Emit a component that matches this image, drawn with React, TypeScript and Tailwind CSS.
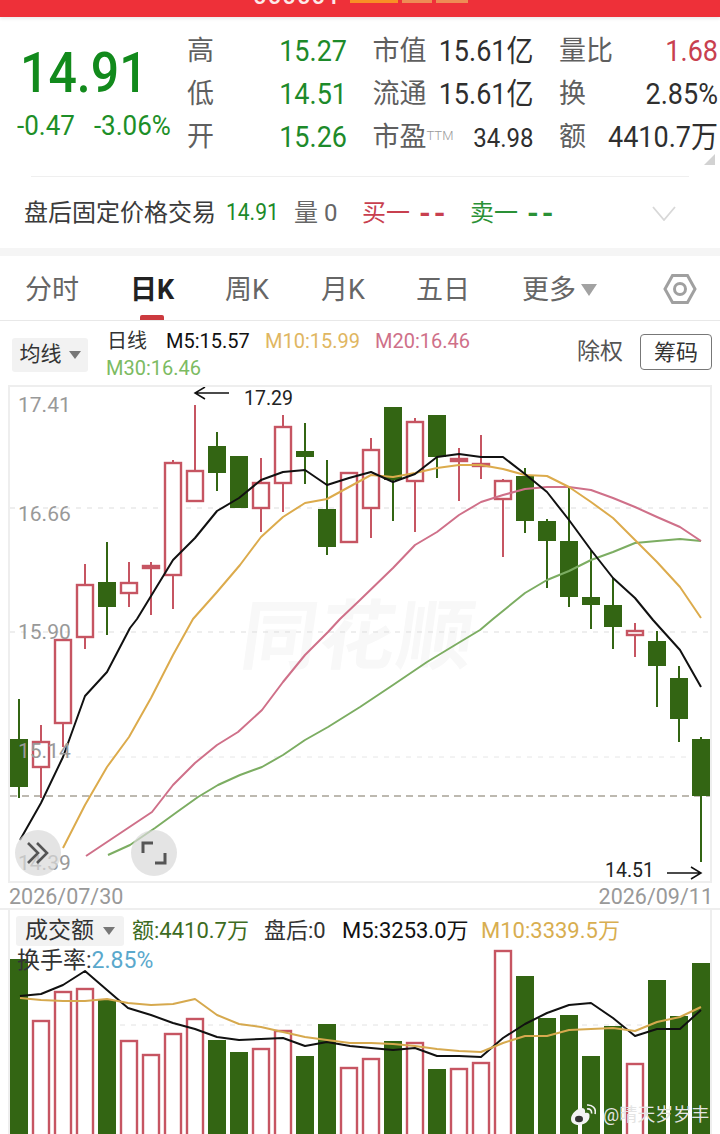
import React from "react";

type Candle = [number, boolean, number, number, number, number];

// x, rising, wick top, wick bottom, body top, body bottom (page coordinates)
const candles: Candle[] = [
  [19, false, 699, 798, 739, 787],
  [41, true, 725, 798, 742, 767],
  [63, true, 640, 747, 640, 723],
  [85, true, 564, 649, 585, 637],
  [107, false, 542, 635, 582, 607],
  [129, true, 562, 607, 583, 593],
  [151, true, 562, 615, 566, 568],
  [173, true, 460, 609, 463, 575],
  [195, true, 405, 501, 471, 501],
  [217, false, 432, 491, 446, 473],
  [239, false, 456, 508, 456, 508],
  [261, true, 458, 532, 483, 508],
  [283, true, 415, 512, 427, 483],
  [305, false, 423, 484, 451, 457],
  [327, false, 460, 555, 509, 547],
  [349, true, 472, 542, 473, 542],
  [371, true, 438, 538, 450, 508],
  [393, false, 407, 521, 407, 480],
  [415, true, 418, 532, 422, 481],
  [437, false, 415, 478, 415, 457],
  [459, true, 448, 501, 459, 461],
  [481, true, 435, 479, 464, 466],
  [503, true, 479, 557, 481, 499],
  [525, false, 468, 533, 476, 521],
  [547, false, 519, 588, 521, 541],
  [569, false, 486, 607, 541, 597],
  [591, false, 550, 629, 597, 605],
  [613, false, 578, 649, 605, 627],
  [635, true, 623, 657, 631, 635],
  [657, false, 631, 707, 641, 666],
  [679, false, 666, 742, 678, 719],
  [701, false, 737, 862, 739, 796],
];

const volumes: [number, boolean, number][] = [
  [19, false, 959], [41, true, 1021], [63, true, 992], [85, true, 989],
  [107, false, 1000], [129, true, 1041], [151, true, 1055], [173, true, 1034],
  [195, true, 1019], [217, false, 1040], [239, false, 1052], [261, true, 1049],
  [283, true, 1031], [305, false, 1056], [327, false, 1024], [349, true, 1068],
  [371, true, 1059], [393, false, 1041], [415, true, 1043], [437, false, 1069],
  [459, true, 1069], [481, true, 1063], [503, true, 951], [525, false, 976],
  [547, false, 1018], [569, false, 1015], [591, false, 1056], [613, false, 1026],
  [635, true, 1064], [657, false, 980], [679, false, 1016], [701, false, 963],
];

const m5 = "20,840 41,803 63,757 85,696 107,672 130,628 137,619 173,560 195,538 217,511 239,498 261,480 283,472 305,470 327,485 349,478 371,472 393,482 415,474 437,457 459,454 481,457 503,457 525,474 547,492 569,520 591,550 613,578 635,598 653,620 680,650 701,687";
const m10 = "63,848 85,805 107,767 129,737 151,698 173,655 193,619 217,592 240,565 261,537 283,517 305,503 327,499 349,487 371,475 393,477 415,473 437,468 459,465 481,465 503,469 525,475 547,476 569,487 591,502 613,518 635,540 657,562 680,587 701,618";
const m20 = "86,856 152,812 173,785 195,763 217,745 238,732 262,710 283,682 305,655 328,632 340,619 360,600 393,568 415,545 437,532 459,515 481,502 503,495 525,489 547,487 569,487 591,490 613,498 635,507 657,517 680,527 701,541";
const m30 = "108,855 130,845 155,828 177,812 198,797 218,785 240,775 262,767 283,755 305,740 328,727 360,707 393,685 427,662 460,642 480,630 493,619 525,593 547,580 569,571 591,560 613,552 635,543 657,541 680,539 701,541";
const volM5 = "20,996 41,994 63,985 85,971 107,990 128,1008 151,1015 173,1023 195,1029 217,1037 239,1040 261,1039 283,1038 305,1046 327,1042 350,1046 371,1048 393,1050 415,1048 437,1056 459,1056 481,1057 503,1038 525,1024 547,1013 569,1005 591,1003 613,1018 635,1036 657,1029 680,1029 701,1010";
const volM10 = "20,998 41,1000 63,1001 85,1001 107,999 128,1003 151,1005 173,1004 195,999 217,1015 239,1024 261,1027 283,1032 305,1037 327,1040 350,1043 371,1043 393,1044 415,1046 437,1049 459,1051 481,1052 503,1043 525,1036 547,1036 569,1030 591,1029 613,1028 635,1031 657,1022 680,1017 701,1007";

const RED = "#c65562";
const GREEN = "#336513";

function Stat({ label, value, color = "text-[#2f2f2f] text-[27px]" }: { label: React.ReactNode; value: string; color?: string }) {
  return (
    <div className="flex items-center justify-between">
      <span className="text-[27px] text-[#5f5f5f]">{label}</span>
      <span className={`inline-block scale-y-[1.1] ${color}`}>{value}</span>
    </div>
  );
}

function PriceChart() {
  return (
    <svg className="relative block" width="700" height="494" viewBox="10 387 700 494">
      <line x1="10" x2="710" y1="508" y2="508" stroke="#ddd" strokeDasharray="5 6" />
      <line x1="10" x2="710" y1="632" y2="632" stroke="#ddd" strokeDasharray="5 6" />
      <line x1="10" x2="710" y1="757" y2="757" stroke="#e6e6e6" strokeDasharray="5 6" />
      <line x1="10" x2="710" y1="796" y2="796" stroke="#a8a296" strokeWidth="1.5" strokeDasharray="7 5" />
      {candles.map(([x, up, wt, wb, bt, bb]) => (
        <g key={x}>
          <line x1={x} x2={x} y1={wt} y2={wb} stroke={up ? RED : GREEN} strokeWidth="2" />
          {up ? (
            <rect x={x - 8} y={bt} width="16" height={Math.max(bb - bt, 2)} fill="#fff" stroke={RED} strokeWidth="2.4" />
          ) : (
            <rect x={x - 9} y={bt} width="18" height={bb - bt} fill={GREEN} />
          )}
        </g>
      ))}
      <polyline points={m30} fill="none" stroke="#7cad62" strokeWidth="2" strokeLinejoin="round" />
      <polyline points={m20} fill="none" stroke="#cf7089" strokeWidth="2" strokeLinejoin="round" />
      <polyline points={m10} fill="none" stroke="#dcab4c" strokeWidth="2" strokeLinejoin="round" />
      <polyline points={m5} fill="none" stroke="#111" strokeWidth="2" strokeLinejoin="round" />
      <path d="M229 393H195M205 387L195 393L205 399" fill="none" stroke="#111" strokeWidth="1.5" />
      <path d="M667 873H701M691 867L701 873L691 879" fill="none" stroke="#111" strokeWidth="1.5" />
    </svg>
  );
}

function VolumeChart() {
  return (
    <svg className="block" width="700" height="224" viewBox="10 910 700 224">
      <line x1="120" x2="710" y1="1025" y2="1025" stroke="#e2e2e2" strokeDasharray="5 6" />
      {volumes.map(([x, up, top]) =>
        up ? (
          <rect key={x} x={x - 8} y={top} width="16" height={1140 - top} fill="#fff" stroke={RED} strokeWidth="2.4" />
        ) : (
          <rect key={x} x={x - 9} y={top} width="18" height={1134 - top} fill={GREEN} />
        ),
      )}
      <polyline points={volM5} fill="none" stroke="#111" strokeWidth="2" strokeLinejoin="round" />
      <polyline points={volM10} fill="none" stroke="#d6a94e" strokeWidth="2" strokeLinejoin="round" />
    </svg>
  );
}

export default function App() {
  return (
    <div className="relative h-[1134px] w-[720px] overflow-hidden bg-white font-[family-name:Roboto,'Noto_Sans_CJK_SC',sans-serif]">
      {/* Red title bar, cut by the top of the picture */}
      <div className="flex h-[17px] items-start overflow-hidden bg-[#ee3039] pl-[253px] shadow-[0_2px_3px_rgba(0,0,0,0.08)]">
        <span className="-mt-[16px] w-[97px] text-[24px] leading-[24px] font-medium tracking-[1px] text-[#fde8e8]">000001</span>
        <span className="h-[3px] w-[48px] bg-[#f98f25]" />
        <span className="ml-[4px] h-[3px] w-[30px] bg-[#ee8b55]" />
        <span className="ml-[4px] h-[3px] w-[32px] bg-[#ee8b55]" />
      </div>

      {/* Quote */}
      <div className="relative h-[231px]">
        <div className="flex pt-[13px]">
          <div className="w-[187px] shrink-0 pl-[17px]">
            <div className="mt-[13px] ml-[3px] origin-center scale-y-[1.12] text-[50px] leading-[60px] font-medium text-[#128a1c]">14.91</div>
            <div className="mt-[8px] flex gap-[19px] text-[26px] leading-[30px] text-[#1d8f28]">
              <span className="inline-block scale-y-[1.05]">-0.47</span>
              <span className="inline-block scale-y-[1.05]">-3.06%</span>
            </div>
          </div>
          <div className="grid w-[531px] grid-cols-[160px_161px_159px] auto-rows-[43px] gap-x-[25.5px]">
            <Stat label="高" value="15.27" color="text-[27px] text-[#1d8a2a]" />
            <Stat label="市值" value="15.61亿" />
            <Stat label="量比" value="1.68" color="text-[27px] text-[#c8404f]" />
            <Stat label="低" value="14.51" color="text-[27px] text-[#1d8a2a]" />
            <Stat label="流通" value="15.61亿" />
            <Stat label="换" value="2.85%" />
            <Stat label="开" value="15.26" color="text-[27px] text-[#1d8a2a]" />
            <Stat
              label={
                <span>
                  市盈<sup className="text-[13px] font-light text-[#9a9a9a]">TTM</sup>
                </span>
              }
              value="34.98"
              color="text-[24px] text-[#2f2f2f]"
            />
            <Stat label="额" value="4410.7万" />
          </div>
        </div>
        <svg className="absolute top-[137px] right-[5px]" width="11" height="11" viewBox="0 0 11 11">
          <path d="M11 0V11H0Z" fill="#d2d2d2" />
        </svg>
        <div className="mx-[31px] mt-[17px] h-px bg-[#efefef]" />
        <div className="mt-[20px] flex h-[32px] items-center pl-[24px] text-[24px] text-[#3b3b3b]">
          <span className="w-[202px]">盘后固定价格交易</span>
          <span className="inline-block w-[68px] scale-y-[1.1] text-[21px] text-[#1d8a2a]">14.91</span>
          <span className="w-[68px] text-[#666]">量 0</span>
          <span className="flex w-[108px] items-center gap-[9px] text-[#c8404f]">
            买一<span className="text-[30px] leading-none font-bold tracking-[3px]">--</span>
          </span>
          <span className="flex items-center gap-[9px] text-[#2a9136]">
            卖一<span className="text-[30px] leading-none font-bold tracking-[3px]">--</span>
          </span>
          <svg className="ml-auto mr-[44px]" width="24" height="15" viewBox="0 0 24 15">
            <path d="M1 1L12 14L23 1" fill="none" stroke="#d8d8d8" strokeWidth="1.8" />
          </svg>
        </div>
      </div>
      <div className="h-[8px] bg-[#f5f5f5]" />

      {/* Period tabs */}
      <div className="relative flex h-[65px] items-center border-b border-[#e8e8e8] pt-[4px] pl-[25px] text-[27px] text-[#666]">
        <span className="w-[105px]">分时</span>
        <span className="w-[95px] font-bold text-[#222]">日K</span>
        <span className="w-[96px]">周K</span>
        <span className="w-[95px]">月K</span>
        <span className="w-[106px]">五日</span>
        <span>更多</span>
        <svg className="ml-[5px]" width="16" height="14" viewBox="0 0 16 14">
          <path d="M0 1H16L8 13Z" fill="#a2a2a2" />
        </svg>
        <svg className="ml-auto mr-[23px] -mt-[2px]" width="34" height="34" viewBox="0 0 34 34">
          <path d="M9.5 3.5H24.5L32 17L24.5 30.5H9.5L2 17Z" fill="none" stroke="#a0a0a0" strokeWidth="3" />
          <circle cx="17" cy="17" r="5.5" fill="none" stroke="#a0a0a0" strokeWidth="3" />
        </svg>
        <div className="absolute bottom-0 left-[140px] h-[5px] w-[24px] rounded-t-[2px] bg-[#cc3a3f]" />
      </div>

      {/* Moving average legend */}
      <div className="flex h-[64px]">
        <div className="ml-[12px] mt-[17px] flex h-[34px] w-[76px] items-center justify-center gap-[7px] rounded-[3px] bg-[#f2f2f2] text-[21px] text-[#333]">
          <span>均线</span>
          <svg width="12" height="8" viewBox="0 0 12 8">
            <path d="M0 0H12L6 8Z" fill="#777" />
          </svg>
        </div>
        <div className="ml-[18px] flex w-[390px] flex-col pt-[7px] text-[20px] leading-[27px]">
          <div className="flex">
            <span className="ml-px w-[59px] text-[#333]">日线</span>
            <span className="w-[99px] text-[#111]">M5:15.57</span>
            <span className="w-[110px] text-[#e0b661]">M10:15.99</span>
            <span className="text-[#cf7089]">M20:16.46</span>
          </div>
          <span className="text-[#7cbb62]">M30:16.46</span>
        </div>
        <div className="ml-auto mr-[8px] flex h-[58px] items-center gap-[17px] pt-[4px]">
          <span className="text-[23px] text-[#555]">除权</span>
          <span className="flex h-[36px] w-[72px] items-center justify-center rounded-[4px] border border-[#777] text-[22px] text-[#333]">筹码</span>
        </div>
      </div>

      {/* Price chart */}
      <div className="relative mx-[8px] border-2 border-[#eee]">
        <span className="absolute top-[205px] left-[232px] skew-x-[-8deg] text-[76px] leading-[90px] font-bold tracking-[2px] text-[#f8f8f8]">同花顺</span>
        <PriceChart />
        {[
          ["17.41", "top-[6px]"],
          ["16.66", "top-[115px]"],
          ["15.90", "top-[233px]"],
          ["15.14", "top-[352px]"],
          ["14.39", "top-[464px]"],
        ].map(([text, pos]) => (
          <span key={text} className={`absolute left-[8px] text-[21px] leading-[24px] text-[#999] ${pos}`}>
            {text}
          </span>
        ))}
        <span className="absolute top-0 left-[234px] text-[19.500px] leading-[24px] text-[#222]">17.29</span>
        <span className="absolute top-[472px] left-[595px] text-[19.500px] leading-[24px] text-[#222]">14.51</span>
        <div className="absolute top-[443px] left-[5px] flex h-[46px] w-[46px] items-center justify-center rounded-full bg-[#d9d9d9]/70">
          <svg width="24" height="24" viewBox="0 0 24 24">
            <path d="M2 2L12 12L2 22M11 2L21 12L11 22" fill="none" stroke="#555" strokeWidth="2.6" />
          </svg>
        </div>
        <div className="absolute top-[443px] left-[121px] flex h-[46px] w-[46px] items-center justify-center rounded-full bg-[#d9d9d9]/70">
          <svg width="26" height="24" viewBox="0 0 26 24">
            <path d="M12 2H2V12M14 22H24V12" fill="none" stroke="#555" strokeWidth="3" />
          </svg>
        </div>
      </div>

      {/* Date range */}
      <div className="flex h-[27px] items-center justify-between border-b-2 border-[#eee] pt-[3px] pr-[7px] pl-[9px] text-[21.500px] leading-[24px] text-[#999]">
        <span>2026/07/30</span>
        <span>2026/09/11</span>
      </div>

      {/* Volume chart */}
      <div className="relative mx-[8px] border-x-2 border-[#eee]">
        <VolumeChart />
        <div className="absolute top-[6px] left-[6px] flex items-center text-[22px] leading-[30px] text-[#333]">
          <div className="flex h-[30px] w-[108px] items-center justify-center gap-[9px] rounded-[3px] bg-[#f2f2f2] text-[23px]">
            <span>成交额</span>
            <svg width="12" height="8" viewBox="0 0 12 8">
              <path d="M0 0H12L6 8Z" fill="#777" />
            </svg>
          </div>
          <span className="ml-[8px] w-[132px] text-[#3d6b22]">额:4410.7万</span>
          <span className="w-[78px]">盘后:0</span>
          <span className="w-[139px] text-[#111]">M5:3253.0万</span>
          <span className="text-[#d8ae50]">M10:3339.5万</span>
        </div>
        <div className="absolute top-[36px] left-[7px] text-[23px] leading-[30px] text-[#333]">
          换手率:<span className="text-[#5aa8cc]">2.85%</span>
        </div>
        <div className="absolute top-[194px] left-[560px] flex items-center gap-[7px] text-[18px] leading-[22px] whitespace-nowrap text-[#e4e4e4]">
          <svg className="shrink-0" width="26" height="22" viewBox="0 0 26 22">
            <path d="M1 15C1 10 7 4 12 4C15 4 15.500 7 15 9C18 8 20 9.500 19.500 12C20 17 14 21 9 21C4 21 1 18.500 1 15Z" fill="#f3f3f3" />
            <ellipse cx="9" cy="15" rx="4" ry="3.300" fill="#333" />
            <path d="M17 5C20 4.500 22 6.500 21.500 9.500M17 1C22.500 0.500 26.500 4.500 25 10" fill="none" stroke="#f3f3f3" strokeWidth="1.600" />
          </svg>
          <span>@晴天岁岁丰</span>
        </div>
      </div>
    </div>
  );
}
